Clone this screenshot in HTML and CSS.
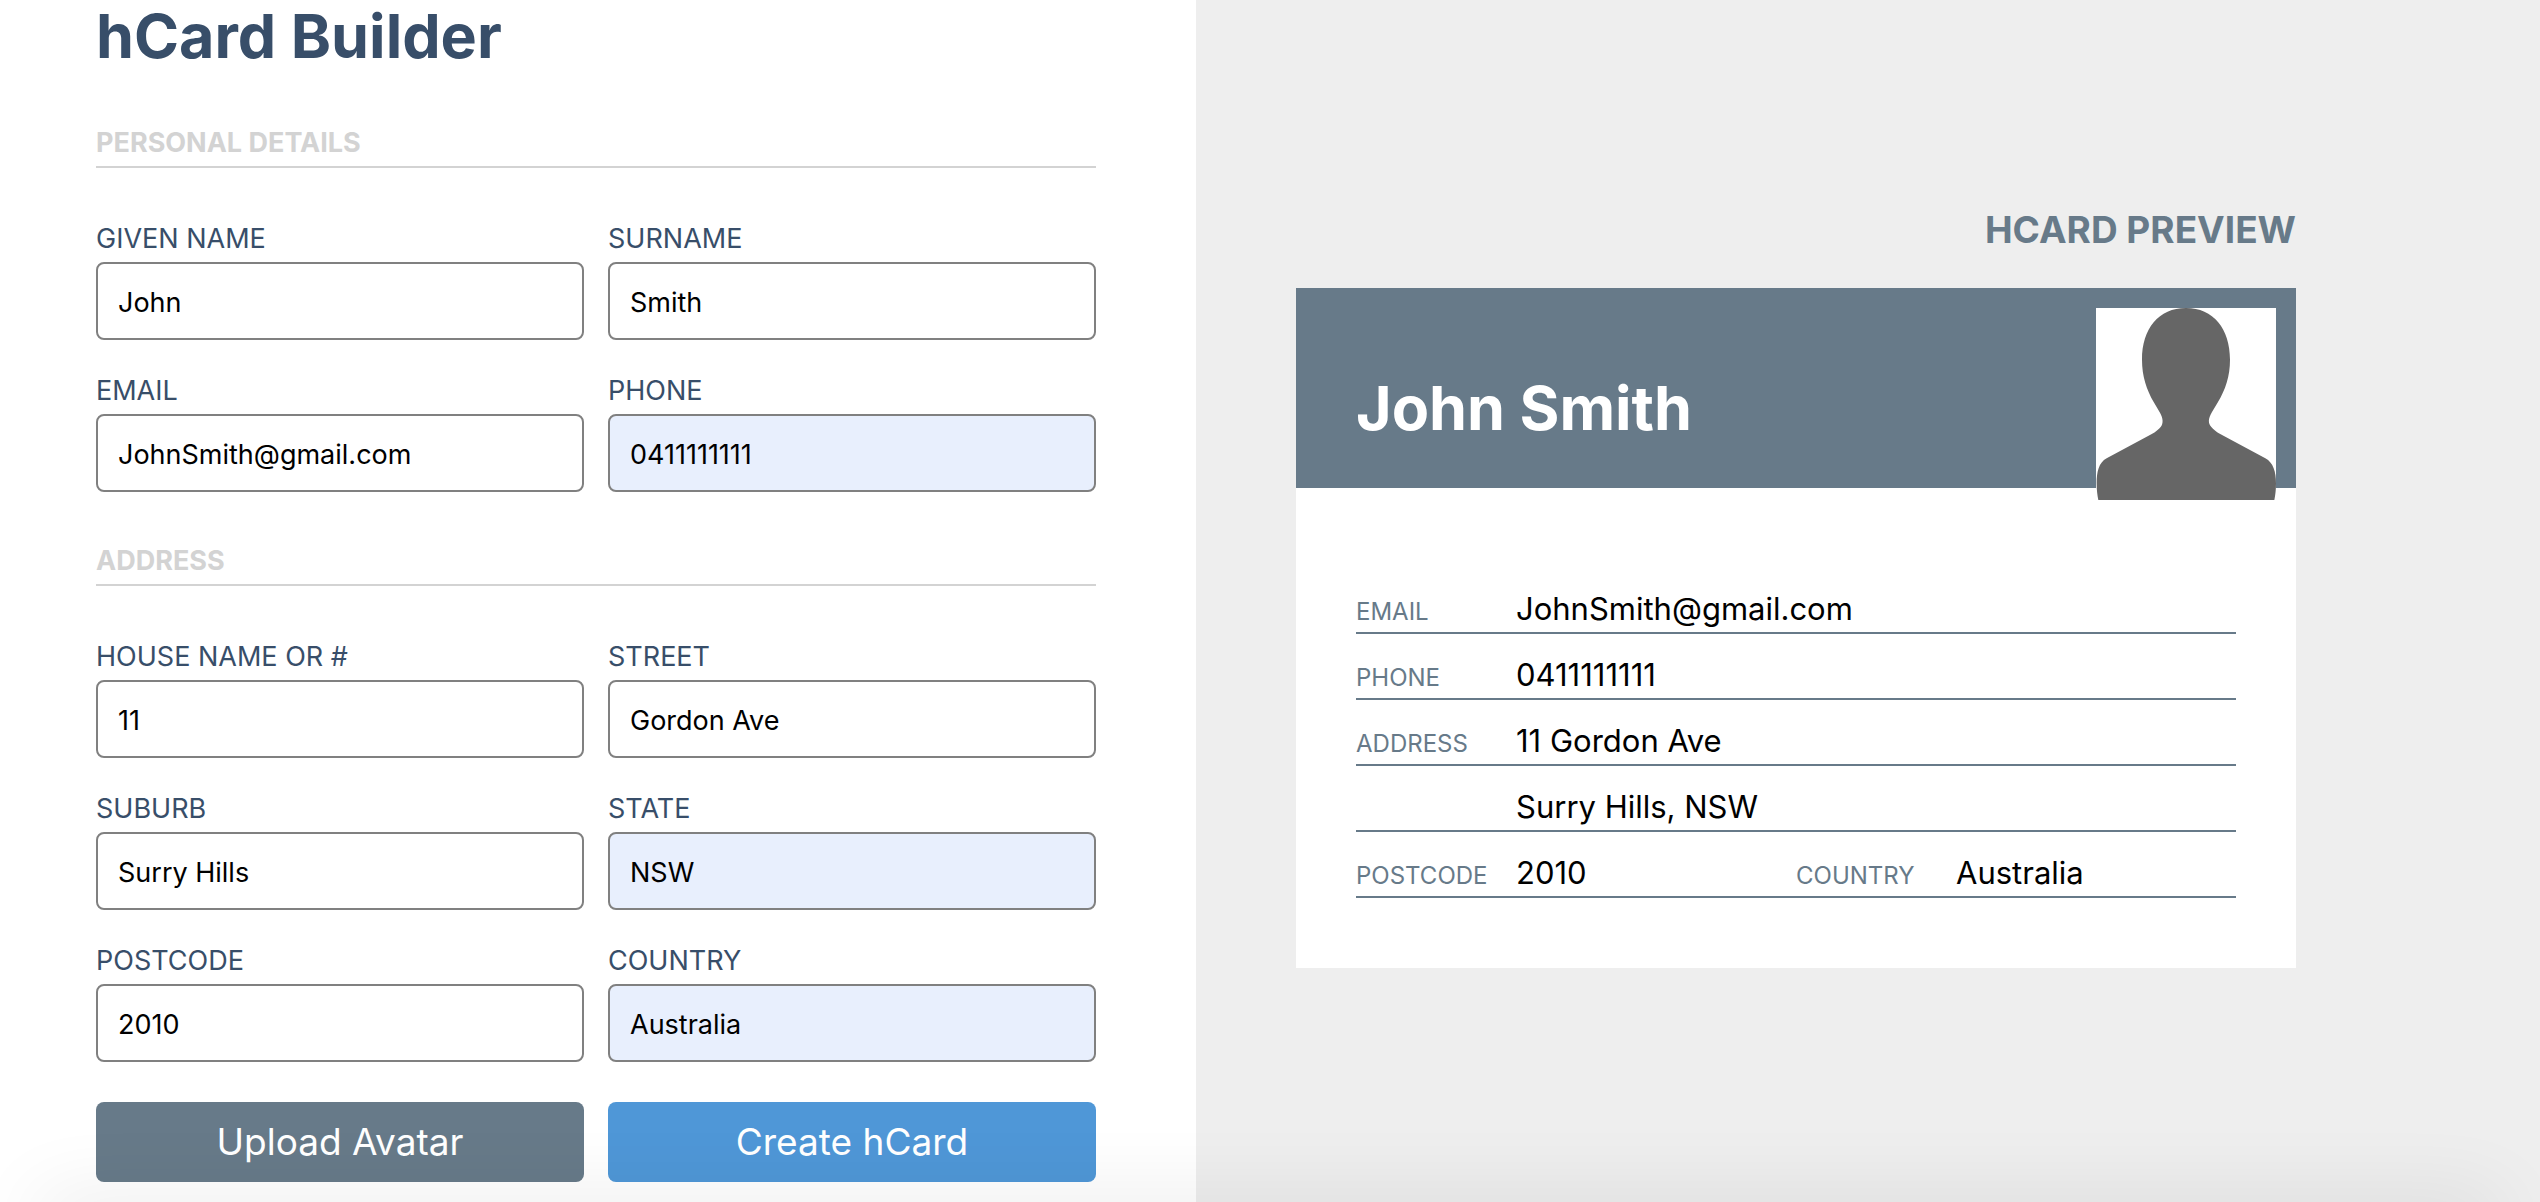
FILE: index.html
```
<!DOCTYPE html>
<html lang="en">
<head>
  <meta charset="utf-8">
  <meta name="viewport" content="width=device-width, initial-scale=1">
  <title>hCard Builder</title>
  <link rel="stylesheet" href="styles.css">
</head>
<body>
  <main class="layout">
    <form class="builder">
      <h1 class="builder-title">hCard Builder</h1>

      <section class="group">
        <h2 class="group-title">Personal details</h2>
        <div class="fields">
          <div class="field">
            <label class="field-label" for="given-name">Given name</label>
            <input class="field-input" id="given-name" type="text" value="John">
          </div>
          <div class="field">
            <label class="field-label" for="surname">Surname</label>
            <input class="field-input" id="surname" type="text" value="Smith">
          </div>
          <div class="field">
            <label class="field-label" for="email">Email</label>
            <input class="field-input" id="email" type="email" value="JohnSmith@gmail.com">
          </div>
          <div class="field">
            <label class="field-label" for="phone">Phone</label>
            <input class="field-input is-filled" id="phone" type="tel" value="0411111111">
          </div>
        </div>
      </section>

      <section class="group">
        <h2 class="group-title">Address</h2>
        <div class="fields">
          <div class="field">
            <label class="field-label" for="house">House name or #</label>
            <input class="field-input" id="house" type="text" value="11">
          </div>
          <div class="field">
            <label class="field-label" for="street">Street</label>
            <input class="field-input" id="street" type="text" value="Gordon Ave">
          </div>
          <div class="field">
            <label class="field-label" for="suburb">Suburb</label>
            <input class="field-input" id="suburb" type="text" value="Surry Hills">
          </div>
          <div class="field">
            <label class="field-label" for="state">State</label>
            <input class="field-input is-filled" id="state" type="text" value="NSW">
          </div>
          <div class="field">
            <label class="field-label" for="postcode">Postcode</label>
            <input class="field-input" id="postcode" type="text" value="2010">
          </div>
          <div class="field">
            <label class="field-label" for="country">Country</label>
            <input class="field-input is-filled" id="country" type="text" value="Australia">
          </div>
        </div>
      </section>

      <div class="actions">
        <button class="button button-upload" type="button">Upload Avatar</button>
        <button class="button button-create" type="submit">Create hCard</button>
      </div>
    </form>

    <section class="preview">
      <h2 class="preview-title">hCard preview</h2>
      <article class="card">
        <header class="card-header">
          <h3 class="card-name">John Smith</h3>
          <svg class="card-avatar" viewBox="0 0 540 576" role="img" aria-label="Avatar">
            <path fill="#666" d="M270 0C352 0 402 62 402 155C402 205 388 245 366 282L348 312C336 332 336 346 346 357C352 364 360 371 374 379L508 451C532 464 540 492 540 526C540 546 538 562 535 576H7C4 562 2 546 2 526C2 492 8 464 32 451L166 379C180 371 188 364 194 357C202 346 202 332 192 314L173 282C152 245 138 205 138 155C138 62 188 0 270 0Z"/>
          </svg>
        </header>
        <dl class="details">
          <div class="row">
            <div class="entry"><dt class="term">Email</dt><dd class="value">JohnSmith@gmail.com</dd></div>
          </div>
          <div class="row">
            <div class="entry"><dt class="term">Phone</dt><dd class="value">0411111111</dd></div>
          </div>
          <div class="row">
            <div class="entry"><dt class="term">Address</dt><dd class="value">11 Gordon Ave</dd></div>
          </div>
          <div class="row">
            <div class="entry"><dt class="term"></dt><dd class="value">Surry Hills, NSW</dd></div>
          </div>
          <div class="row">
            <div class="entry"><dt class="term">Postcode</dt><dd class="value">2010</dd></div>
            <div class="entry"><dt class="term">Country</dt><dd class="value">Australia</dd></div>
          </div>
        </dl>
      </article>
    </section>
  </main>
  <div class="bottom-shade"></div>
</body>
</html>
```
FILE: styles.css
```
*,
*::before,
*::after {
  box-sizing: border-box;
}

body,
h1,
h2,
h3,
dl,
dd {
  margin: 0;
}

body {
  background: #fff;
  color: #000;
  font-family: Inter, "Liberation Sans", sans-serif;
  overflow-x: hidden;
}

.layout {
  display: grid;
  grid-template-columns: 299fr 336fr;
  min-height: 100vh;
}

/* Form */

.builder {
  width: 100%;
  max-width: 1196px;
  padding: 0 100px 20px 96px;
}

.builder-title {
  margin-bottom: 54px;
  color: #384e69;
  font-size: 61px;
  font-weight: 700;
  line-height: 72px;
}

.group + .group {
  margin-top: 52px;
}

.group-title {
  margin-bottom: 54px;
  padding-bottom: 6px;
  border-bottom: 2px solid #d3d3d3;
  color: #d3d3d3;
  font-size: 27px;
  font-weight: 700;
  line-height: 34px;
  text-transform: uppercase;
}

.fields,
.actions {
  display: grid;
  grid-template-columns: 1fr 1fr;
  gap: 34px 24px;
}

.field {
  display: flex;
  flex-direction: column;
  gap: 6px;
}

.field-label {
  color: #384e69;
  font-size: 27px;
  line-height: 34px;
  text-transform: uppercase;
}

.field-input {
  width: 100%;
  padding: 22px 20px 18px;
  border: 2px solid #808080;
  border-radius: 8px;
  background: #fff;
  color: #000;
  font-family: inherit;
  font-size: 27px;
  line-height: 34px;
}

.field-input.is-filled {
  background: #e8effd;
}

.actions {
  margin-top: 40px;
}

.button {
  padding: 18px 20px;
  border: 0;
  border-radius: 8px;
  color: #fff;
  font-family: inherit;
  font-size: 37px;
  line-height: 44px;
}

.button-upload {
  background: #677a89;
}

.button-create {
  background: #4f97d7;
}

/* Preview */

.preview {
  padding: 208px 244px 100px 100px;
  background: #eee;
}

.preview-title {
  margin-bottom: 36px;
  color: #677a89;
  font-size: 37px;
  font-weight: 700;
  line-height: 44px;
  text-align: right;
  text-transform: uppercase;
}

.card {
  background: #fff;
}

.card-header {
  display: flex;
  align-items: flex-end;
  justify-content: space-between;
  height: 200px;
  padding: 20px 20px 44px 60px;
  background: #677a89;
}

.card-name {
  color: #fff;
  font-size: 61px;
  font-weight: 700;
  line-height: 72px;
}

.card-avatar {
  flex: none;
  align-self: flex-start;
  width: 180px;
  height: 192px;
  background: #fff;
}

.details {
  padding: 80px 60px 70px;
}

.row {
  display: flex;
  padding: 21px 0 3px;
  border-bottom: 2px solid #677a89;
}

.entry {
  display: flex;
  flex: 1;
  align-items: baseline;
}

.term {
  flex: none;
  width: 160px;
  color: #677a89;
  font-size: 24px;
  text-transform: uppercase;
}

.value {
  font-size: 31px;
  line-height: 40px;
}

/* Soft shade along the window's bottom edge */

.bottom-shade {
  position: fixed;
  right: 40px;
  bottom: -40px;
  left: 40px;
  height: 40px;
  box-shadow: 0 0 80px rgba(0, 0, 0, 0.11);
  pointer-events: none;
}
```
